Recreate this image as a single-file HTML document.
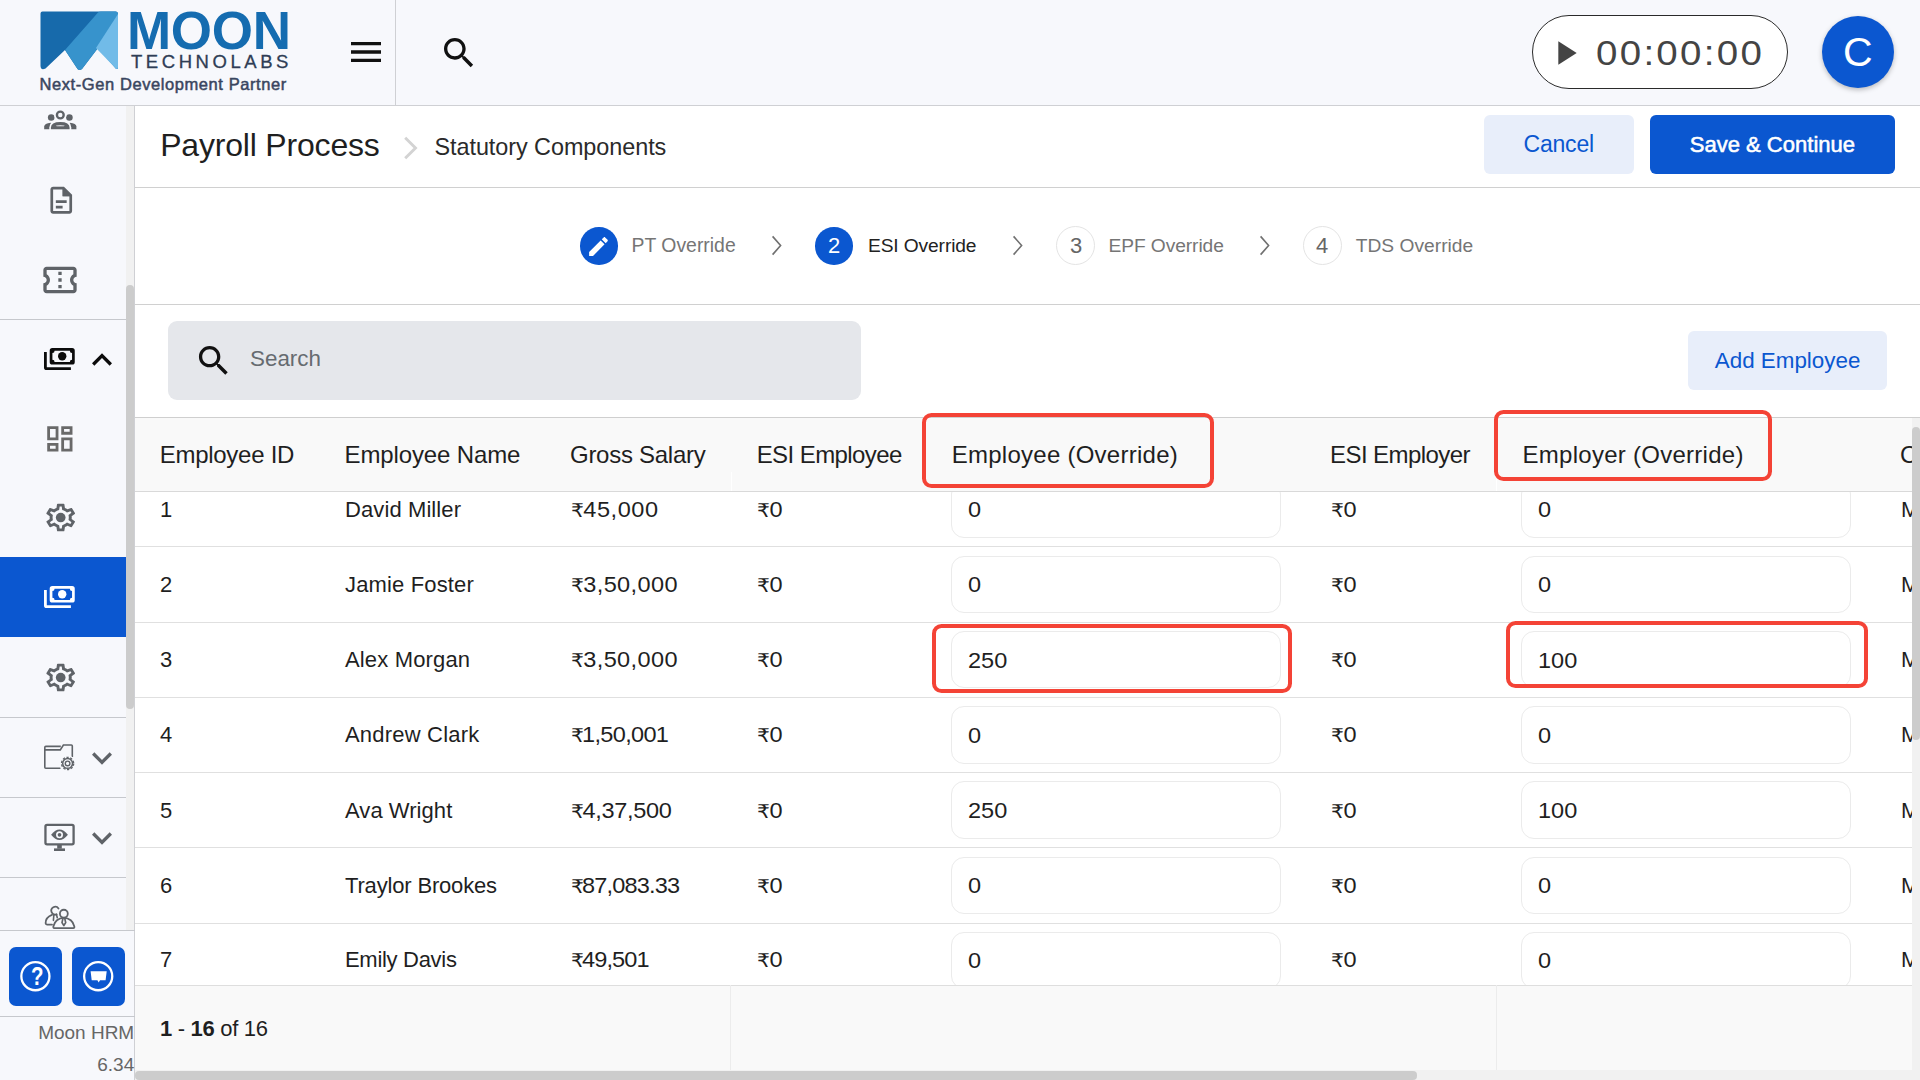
<!DOCTYPE html>
<html lang="en"><head><meta charset="utf-8"><title>Payroll Process - Statutory Components</title>
<style>
html,body{margin:0;padding:0}
body{width:1920px;height:1080px;overflow:hidden;position:relative;background:#fff;font-family:"Liberation Sans","DejaVu Sans",sans-serif;color:#1f1f1f}
.a{position:absolute;box-sizing:border-box}
.t{position:absolute;white-space:nowrap;line-height:1em}
.ic{position:absolute;display:block}
.hl{position:absolute;height:1px;background:#d0d0d0}
.vl{position:absolute;width:1px;background:#d6d6d6}
.inp{position:absolute;box-sizing:border-box;width:330.300px;height:57.400px;border:1px solid #ebebeb;border-radius:13px;background:#fff}
.red{position:absolute;box-sizing:border-box;border:4px solid #f44336;border-radius:9.500px}
.rs{font-size:.86em;margin-right:-1px}
</style></head><body>

<div class="a" style="left:0;top:0;width:1920px;height:105px;background:#f7f8fc"></div>
<div class="hl" style="left:0;top:105px;width:1920px;background:#cfd0d4"></div>
<div class="vl" style="left:395px;top:0;height:105px;background:#cfd0d4"></div>
<svg class="ic" style="left:38px;top:9px" width="84" height="64" viewBox="38 9 84 64">
<path d="M42.500 11.500H115.500Q118 11.500 118 14V67Q118 70 115.800 68.500L98 48L82 69Q79.500 71 77.500 69L65 50L45.500 68.500Q41 71 40.500 66V13.500Q40.500 11.500 42.500 11.500Z" fill="#176aab"/>
<path d="M98 12.500Q99 11.500 101 11.500H115.500Q118 11.500 118 14V67Q118 70 115.800 68.500L98 48L82 69Q79.500 71 77.500 69L65 50Z" fill="#3793cc"/>
<path d="M118 14V67Q118 70 115.800 68.500L96 48Z" fill="#71bbe8"/>
</svg>
<span class="t" style="left:127px;top:4.14px;font-size:53px;color:#156cb0;font-weight:700;letter-spacing:-0.3px;font-family:"Liberation Sans",sans-serif;">MOON</span>
<span class="t" style="left:131px;top:52.84px;font-size:18.5px;color:#2f3d55;font-weight:400;letter-spacing:3.55px;-webkit-text-stroke:0.3px #2f3d55;">TECHNOLABS</span>
<span class="t" style="left:39.5px;top:76.03px;font-size:16.5px;color:#3a4660;font-weight:400;letter-spacing:0.58px;-webkit-text-stroke:0.5px #3a4660;">Next-Gen Development Partner</span>
<svg class="ic" style="left:346.0px;top:32.0px" width="40" height="40" viewBox="0 0 24 24" fill="#111"><path d="M3 18h18v-2H3v2zm0-5h18v-2H3v2zm0-7v2h18V6H3z"/></svg>
<svg class="ic" style="left:438.5px;top:32.6px" width="40" height="40" viewBox="0 0 24 24" fill="#111"><path d="M15.5 14h-.79l-.28-.27C15.41 12.59 16 11.11 16 9.5 16 5.91 13.09 3 9.5 3S3 5.91 3 9.5 5.91 16 9.5 16c1.61 0 3.09-.59 4.23-1.57l.27.28v.79l5 4.99L20.49 19l-4.99-5zm-6 0C7.01 14 5 11.99 5 9.5S7.01 5 9.5 5 14 7.01 14 9.5 11.99 14 9.5 14z"/></svg>
<div class="a" style="left:1532px;top:15px;width:256px;height:74px;border:1px solid #2a2a2a;border-radius:37px;background:#fff"></div>
<svg class="ic" style="left:1545.0px;top:32.5px" width="40" height="40" viewBox="0 0 24 24" fill="#444"><path d="M8 5v14l11-7z"/></svg>
<span class="t" style="left:1596.3px;top:35.37px;font-size:35px;color:#444;font-weight:400;letter-spacing:2.07px;transform:scaleX(1.1);transform-origin:0 0;">00:00:00</span>
<div class="a" style="left:1821.800px;top:15.600px;width:72.600px;height:72.600px;border-radius:50%;background:#0b57d0;box-shadow:0 2px 5px rgba(0,0,0,.25)"></div>
<span class="t" style="left:1843px;top:32.29px;font-size:41px;color:#fff;font-weight:400;letter-spacing:0px;">C</span>
<div class="a" style="left:0;top:106px;width:134px;height:974px;background:#f7f8fc"></div>
<div class="vl" style="left:134px;top:106px;height:974px;background:#cfd0d4"></div>
<div class="a" style="left:126px;top:106px;width:8px;height:824px;background:#f1f1f1"></div>
<div class="a" style="left:126px;top:285px;width:8px;height:424px;background:#ccc;border-radius:4px"></div>
<div class="hl" style="left:0;top:319px;width:126px;background:#c6c8cd"></div>
<div class="hl" style="left:0;top:717px;width:126px;background:#c6c8cd"></div>
<div class="hl" style="left:0;top:797px;width:126px;background:#c6c8cd"></div>
<div class="hl" style="left:0;top:877px;width:126px;background:#c6c8cd"></div>
<div class="a" style="left:0;top:557px;width:126px;height:80px;background:#0b57d0"></div>
<svg class="ic" style="left:40px;top:106px" width="40" height="28" viewBox="40 106 40 28">
<g fill="#5f6368"><circle cx="51.2" cy="117.5" r="3.3"/><circle cx="69.4" cy="117.5" r="3.3"/>
<path d="M44.2 129.2V126.600Q44.2 123.200 50.8 122.700L52.5 129.2Z"/><path d="M76.4 129.2V126.600Q76.4 123.200 69.8 122.700L68.1 129.2Z"/></g>
<circle cx="60.3" cy="115" r="6.200" fill="#f7f8fc"/>
<path d="M49.3 130V127.500Q49.3 120.300 60.3 120.300Q71.300 120.300 71.300 127.500V130Z" fill="#f7f8fc"/>
<circle cx="60.3" cy="115" r="3.400" fill="none" stroke="#5f6368" stroke-width="2.350"/>
<path d="M50.9 129.2V127.800Q50.9 121.900 60.3 121.900Q69.600 121.900 69.600 127.800V129.2Z" fill="#5f6368"/>
<ellipse cx="60.3" cy="125.800" rx="4.400" ry="0.550" fill="#f7f8fc"/>
</svg>
<svg class="ic" style="left:44.55px;top:184.1px" width="32.5" height="32.5" viewBox="0 0 24 24" fill="#5f6368"><path d="M8 16h5v2H8zm0-4h8v2H8zm6-10H6c-1.1 0-2 .9-2 2v16c0 1.1.89 2 1.99 2H18c1.1 0 2-.9 2-2V8l-6-6zm4 18H6V4h7v5h5v11z"/><path d="M13 3.2L18.800 9H13z"/></svg>
<svg class="ic" style="left:39.5px;top:259.6px" width="40" height="40" viewBox="0 0 24 24" fill="#5f6368"><path d="M22 10V6c0-1.11-.9-2-2-2H4c-1.1 0-1.99.89-1.99 2v4c1.1 0 1.99.9 1.99 2s-.89 2-2 2v4c0 1.1.9 2 2 2h16c1.1 0 2-.9 2-2v-4c-1.1 0-2-.9-2-2s.9-2 2-2zm-2-1.46c-1.19.69-2 1.99-2 3.46s.81 2.77 2 3.46V18H4v-2.54c1.19-.69 2-1.99 2-3.46 0-1.48-.8-2.77-1.99-3.46L4 6h16v2.54zM11 15h2v2h-2zm0-4h2v2h-2zm0-4h2v2h-2z"/></svg>
<svg class="ic" style="left:44px;top:348.4px" width="31" height="22.500" viewBox="0 0 31 22.500" fill="#0c0c0c"><path fill-rule="evenodd" d="M8.300 0H28.150a2.600 2.600 0 0 1 2.600 2.600V14a2.600 2.600 0 0 1-2.600 2.600H8.300a2.600 2.600 0 0 1-2.600-2.600V2.600a2.600 2.600 0 0 1 2.600-2.600ZM10.600 2.700H25.850a2.200 2.200 0 0 0 2.200 2.200V11.700a2.200 2.200 0 0 0-2.200 2.200H10.600a2.200 2.200 0 0 0-2.200-2.200V4.900a2.200 2.200 0 0 0 2.200-2.200Z"/><circle cx="18.200" cy="8.300" r="4.200"/><path d="M0 3.900H2.800V19.300H26.900V22.100H2.600A2.600 2.600 0 0 1 0 19.500Z"/></svg>
<svg class="ic" style="left:82.0px;top:339.85px" width="40" height="40" viewBox="0 0 24 24" fill="#0c0c0c"><path d="M12 8l-6 6 1.41 1.41L12 10.83l4.59 4.58L18 14z"/></svg>
<svg class="ic" style="left:42.699999999999996px;top:421.95px" width="33.7" height="33.7" viewBox="0 0 24 24" fill="#696969"><path d="M19 5v2h-4V5h4M9 5v6H5V5h4m10 8v6h-4v-6h4M9 17v2H5v-2h4M21 3h-8v6h8V3zM11 3H3v10h8V3zm10 8h-8v10h8V11zm-10 4H3v6h8v-6z"/></svg>
<svg class="ic" style="left:43.10px;top:500.85px" width="35.4" height="33.1" viewBox="0 0 24 24" preserveAspectRatio="none" fill="#5f6368"><path d="M19.43 12.98c.04-.32.07-.64.07-.98 0-.34-.03-.66-.07-.98l2.11-1.65c.19-.15.24-.42.12-.64l-2-3.46c-.09-.16-.26-.25-.44-.25-.06 0-.12.01-.17.03l-2.49 1c-.52-.4-1.08-.73-1.69-.98l-.38-2.65C14.46 2.18 14.25 2 14 2h-4c-.25 0-.46.18-.49.42l-.38 2.65c-.61.25-1.17.59-1.69.98l-2.49-1c-.06-.02-.12-.03-.18-.03-.17 0-.34.09-.43.25l-2 3.46c-.13.22-.07.49.12.64l2.11 1.65c-.04.32-.07.65-.07.98 0 .33.03.66.07.98l-2.11 1.65c-.19.15-.24.42-.12.64l2 3.46c.09.16.26.25.44.25.06 0 .12-.01.17-.03l2.49-1c.52.4 1.08.73 1.69.98l.38 2.65c.03.24.24.42.49.42h4c.25 0 .46-.18.49-.42l.38-2.65c.61-.25 1.17-.59 1.69-.98l2.49 1c.06.02.12.03.18.03.17 0 .34-.09.43-.25l2-3.46c.12-.22.07-.49-.12-.64l-2.11-1.65zm-1.98-1.71c.04.31.05.52.05.73 0 .21-.02.43-.05.73l-.14 1.13.89.7 1.08.84-.7 1.21-1.27-.51-1.04-.42-.9.68c-.43.32-.84.56-1.25.73l-1.06.43-.16 1.13-.2 1.35h-1.4l-.19-1.35-.16-1.13-1.06-.43c-.43-.18-.83-.41-1.23-.71l-.91-.7-1.06.43-1.27.51-.7-1.21 1.08-.84.89-.7-.14-1.13c-.03-.31-.05-.54-.05-.74s.02-.43.05-.73l.14-1.13-.89-.7-1.08-.84.7-1.21 1.27.51 1.04.42.9-.68c.43-.32.84-.56 1.25-.73l1.06-.43.16-1.13.2-1.35h1.39l.19 1.35.16 1.13 1.06.43c.43.18.83.41 1.23.71l.91.7 1.06-.43 1.27-.51.7 1.21-1.07.85-.89.7.14 1.13z"/><ellipse cx="12" cy="12" rx="3.300" ry="3.500"/></svg>
<svg class="ic" style="left:44px;top:586.4px" width="31" height="22.500" viewBox="0 0 31 22.500" fill="#fff"><path fill-rule="evenodd" d="M8.300 0H28.150a2.600 2.600 0 0 1 2.600 2.600V14a2.600 2.600 0 0 1-2.600 2.600H8.300a2.600 2.600 0 0 1-2.600-2.600V2.600a2.600 2.600 0 0 1 2.600-2.600ZM10.600 2.700H25.850a2.200 2.200 0 0 0 2.200 2.200V11.700a2.200 2.200 0 0 0-2.200 2.200H10.600a2.200 2.200 0 0 0-2.200-2.200V4.900a2.200 2.200 0 0 0 2.200-2.200Z"/><circle cx="18.200" cy="8.300" r="4.200"/><path d="M0 3.900H2.800V19.300H26.900V22.100H2.600A2.600 2.600 0 0 1 0 19.500Z"/></svg>
<svg class="ic" style="left:43.10px;top:660.85px" width="35.4" height="33.1" viewBox="0 0 24 24" preserveAspectRatio="none" fill="#5f6368"><path d="M19.43 12.98c.04-.32.07-.64.07-.98 0-.34-.03-.66-.07-.98l2.11-1.65c.19-.15.24-.42.12-.64l-2-3.46c-.09-.16-.26-.25-.44-.25-.06 0-.12.01-.17.03l-2.49 1c-.52-.4-1.08-.73-1.69-.98l-.38-2.65C14.46 2.18 14.25 2 14 2h-4c-.25 0-.46.18-.49.42l-.38 2.65c-.61.25-1.17.59-1.69.98l-2.49-1c-.06-.02-.12-.03-.18-.03-.17 0-.34.09-.43.25l-2 3.46c-.13.22-.07.49.12.64l2.11 1.65c-.04.32-.07.65-.07.98 0 .33.03.66.07.98l-2.11 1.65c-.19.15-.24.42-.12.64l2 3.46c.09.16.26.25.44.25.06 0 .12-.01.17-.03l2.49-1c.52.4 1.08.73 1.69.98l.38 2.65c.03.24.24.42.49.42h4c.25 0 .46-.18.49-.42l.38-2.65c.61-.25 1.17-.59 1.69-.98l2.49 1c.06.02.12.03.18.03.17 0 .34-.09.43-.25l2-3.46c.12-.22.07-.49-.12-.64l-2.11-1.65zm-1.98-1.71c.04.31.05.52.05.73 0 .21-.02.43-.05.73l-.14 1.13.89.7 1.08.84-.7 1.21-1.27-.51-1.04-.42-.9.68c-.43.32-.84.56-1.25.73l-1.06.43-.16 1.13-.2 1.35h-1.4l-.19-1.35-.16-1.13-1.06-.43c-.43-.18-.83-.41-1.23-.71l-.91-.7-1.06.43-1.27.51-.7-1.21 1.08-.84.89-.7-.14-1.13c-.03-.31-.05-.54-.05-.74s.02-.43.05-.73l.14-1.13-.89-.7-1.08-.84.7-1.21 1.27.51 1.04.42.9-.68c.43-.32.84-.56 1.25-.73l1.06-.43.16-1.13.2-1.35h1.39l.19 1.35.16 1.13 1.06.43c.43.18.83.41 1.23.71l.91.7 1.06-.43 1.27-.51.7 1.21-1.07.85-.89.7.14 1.13z"/><ellipse cx="12" cy="12" rx="3.300" ry="3.500"/></svg>
<svg class="ic" style="left:40px;top:740px" width="40" height="36" viewBox="40 740 40 36" fill="none" stroke="#5f6368" stroke-width="1.600">
<path d="M44.8 767.200V747.400Q44.8 746.400 45.8 746.400H60.8M44.8 749.900H60.300L63.400 745H71.300Q72.300 745 72.300 746V757M44.8 767.200Q44.8 768.200 45.8 768.200H60.500"/>
<circle cx="67.600" cy="763.450" r="8" fill="#f7f8fc" stroke="none"/>
<circle cx="67.600" cy="763.450" r="4.900" stroke-width="1.500"/>
<circle cx="67.600" cy="763.450" r="6.100" stroke-width="1.300" stroke-dasharray="2.300 1.533"/>
<circle cx="67.600" cy="763.450" r="2.300" stroke-width="1.400"/>
</svg>
<svg class="ic" style="left:81.75px;top:738.1px" width="40" height="40" viewBox="0 0 24 24" fill="#5f6368"><path d="M16.59 8.59L12 13.17 7.41 8.59 6 10l6 6 6-6z"/></svg>
<svg class="ic" style="left:40px;top:820px" width="40" height="34" viewBox="40 820 40 34">
<rect x="45.450" y="824.950" width="28.150" height="19.400" rx="1.600" fill="none" stroke="#5f6368" stroke-width="2.300"/>
<rect x="57.200" y="845" width="4.600" height="3.600" fill="#5f6368"/><rect x="54" y="848.400" width="11" height="2.600" fill="#5f6368"/>
<path d="M51.100 834.800Q59.500 824.400 67.900 834.800Q59.500 845.200 51.100 834.800Z" fill="#5f6368"/>
<circle cx="59.500" cy="834.800" r="3.500" fill="#f7f8fc"/><circle cx="59.500" cy="834.800" r="1.850" fill="#5f6368"/>
</svg>
<svg class="ic" style="left:81.75px;top:818.2px" width="40" height="40" viewBox="0 0 24 24" fill="#5f6368"><path d="M16.59 8.59L12 13.17 7.41 8.59 6 10l6 6 6-6z"/></svg>
<svg class="ic" style="left:40px;top:900px" width="40" height="30" viewBox="40 900 40 30" fill="none" stroke="#5f6368" stroke-width="1.800" stroke-linecap="round" stroke-linejoin="round">
<path d="M58.500 908.600A3.900 3.900 0 1 0 56.600 914.400"/>
<path d="M52 914.900C48 916.500 45.500 920 45.600 923.300Q45.700 924.600 47 924.600H52"/>
<path d="M53.800 915.500L53.400 920.400M56.400 914.300L57.300 917.800" stroke-width="1.600"/>
<path d="M54.300 928.200C53.400 928.200 53.200 927.300 53.400 926.300C54.300 921.500 58.500 917.800 63.850 917.800C69.200 917.800 73.400 921.500 74.300 926.300C74.500 927.300 74.300 928.200 73.300 928.200Z" fill="#f7f8fc"/>
<circle cx="63.850" cy="913.700" r="3.950" fill="#f7f8fc"/>
<path d="M62.900 918.600L62 922.600L63.850 925.500L65.700 922.600L64.800 918.600" stroke-width="1.700"/>
</svg>
<div class="hl" style="left:0;top:930px;width:135px;background:#c6c8cd"></div>
<div class="a" style="left:9.100px;top:946.600px;width:52.800px;height:59.400px;background:#0b57d0;border-radius:7px"></div>
<div class="a" style="left:72.100px;top:946.600px;width:53.100px;height:59.400px;background:#0b57d0;border-radius:7px"></div>
<svg class="ic" style="left:15px;top:956px" width="120" height="40" viewBox="15 956 120 40">
<circle cx="35.400" cy="976.200" r="14.050" fill="none" stroke="#fff" stroke-width="2.300"/>
<circle cx="98.200" cy="976.200" r="14.050" fill="none" stroke="#fff" stroke-width="2.300"/>
<path d="M90.600 971.200H106.700L105.600 980.300H100L98.700 982.400L97.400 980.300H91.700Z" fill="#fff"/></svg>
<span class="t" style="left:30.7px;top:964.21px;font-size:25.5px;color:#fff;font-weight:700;letter-spacing:0px;transform:scaleX(0.8);transform-origin:0 0;">?</span>
<div class="hl" style="left:0;top:1016px;width:135px;background:#c6c8cd"></div>
<span class="t" style="right:1785.8px;top:1022.52px;font-size:19px;color:#666;font-weight:400;letter-spacing:0px;">Moon HRM</span>
<span class="t" style="right:1785.8px;top:1054.72px;font-size:19px;color:#666;font-weight:400;letter-spacing:0px;">6.34</span>
<span class="t" style="left:160.2px;top:129.01px;font-size:32px;color:#1f1f1f;font-weight:400;letter-spacing:-0.19px;">Payroll Process</span>
<svg class="ic" style="left:397.600px;top:132.500px" width="26" height="30" viewBox="0 0 26 30" fill="none" stroke="#d3d3d3" stroke-width="2.900"><path d="M7.200 4.800L17.500 15L7.200 25.200"/></svg>
<span class="t" style="left:434.5px;top:136.09px;font-size:23.4px;color:#2a2a2a;font-weight:400;letter-spacing:-0.05px;">Statutory Components</span>
<div class="a" style="left:1484px;top:115px;width:150px;height:59px;background:#e8eefa;border-radius:6px"></div>
<span class="t" style="left:1523.5px;top:133.03px;font-size:23px;color:#0b57d0;font-weight:400;letter-spacing:-0.2px;">Cancel</span>
<div class="a" style="left:1650px;top:115px;width:245px;height:59px;background:#0b57d0;border-radius:6px"></div>
<span class="t" style="left:1689.7px;top:134.08px;font-size:22px;color:#fff;font-weight:400;letter-spacing:0.02px;-webkit-text-stroke:0.55px #fff;">Save &amp; Continue</span>
<div class="hl" style="left:135px;top:187px;width:1785px"></div>
<div class="a" style="left:580px;top:227px;width:37.5px;height:37.5px;border-radius:50%;background:#0b57d0"></div>
<svg class="ic" style="left:586.0px;top:233.5px" width="25" height="25" viewBox="0 0 24 24" fill="#fff"><path d="M3 17.25V21h3.75L17.81 9.94l-3.75-3.75L3 17.25zM20.71 7.04c.39-.39.39-1.02 0-1.41l-2.34-2.34c-.39-.39-1.02-.39-1.41 0l-1.83 1.83 3.75 3.75 1.83-1.83z"/></svg>
<span class="t" style="left:631.5px;top:236.18px;font-size:19.4px;color:#757575;font-weight:400;letter-spacing:0px;">PT Override</span>
<svg class="ic" style="left:769px;top:233px" width="16" height="25" viewBox="0 0 16 25" fill="none" stroke="#707070" stroke-width="1.600"><path d="M3.600 3.400L11.600 12.500L3.600 21.600"/></svg>
<div class="a" style="left:815px;top:227px;width:37.5px;height:37.5px;border-radius:50%;background:#0b57d0"></div>
<span class="t" style="left:828px;top:235.38px;font-size:22px;color:#fff;font-weight:400;letter-spacing:0px;">2</span>
<span class="t" style="left:868px;top:235.75px;font-size:19.2px;color:#222;font-weight:400;letter-spacing:-0.12px;">ESI Override</span>
<svg class="ic" style="left:1010px;top:233px" width="16" height="25" viewBox="0 0 16 25" fill="none" stroke="#707070" stroke-width="1.600"><path d="M3.600 3.400L11.600 12.500L3.600 21.600"/></svg>
<div class="a" style="left:1056px;top:226.300px;width:39px;height:39px;border-radius:50%;border:1px solid #e4e4e4;background:#fff"></div>
<span class="t" style="left:1070px;top:235.38px;font-size:22px;color:#666;font-weight:400;letter-spacing:0px;">3</span>
<span class="t" style="left:1108.5px;top:235.75px;font-size:19.2px;color:#757575;font-weight:400;letter-spacing:-0.08px;">EPF Override</span>
<svg class="ic" style="left:1257px;top:233px" width="16" height="25" viewBox="0 0 16 25" fill="none" stroke="#707070" stroke-width="1.600"><path d="M3.600 3.400L11.600 12.500L3.600 21.600"/></svg>
<div class="a" style="left:1303px;top:226.300px;width:39px;height:39px;border-radius:50%;border:1px solid #e4e4e4;background:#fff"></div>
<span class="t" style="left:1316px;top:235.38px;font-size:22px;color:#666;font-weight:400;letter-spacing:0px;">4</span>
<span class="t" style="left:1355.7px;top:235.75px;font-size:19.2px;color:#757575;font-weight:400;letter-spacing:0.02px;">TDS Override</span>
<div class="hl" style="left:135px;top:304px;width:1785px"></div>
<div class="a" style="left:168px;top:321px;width:693px;height:79px;background:#e5e7eb;border-radius:9px"></div>
<svg class="ic" style="left:194.25px;top:340.55px" width="39.5" height="39.5" viewBox="0 0 24 24" fill="#111"><path d="M15.5 14h-.79l-.28-.27C15.41 12.59 16 11.11 16 9.5 16 5.91 13.09 3 9.5 3S3 5.91 3 9.5 5.91 16 9.5 16c1.61 0 3.09-.59 4.23-1.57l.27.28v.79l5 4.99L20.49 19l-4.99-5zm-6 0C7.01 14 5 11.99 5 9.5S7.01 5 9.5 5 14 7.01 14 9.5 11.99 14 9.5 14z"/></svg>
<span class="t" style="left:250px;top:348.04px;font-size:22.4px;color:#666b70;font-weight:400;letter-spacing:0px;">Search</span>
<div class="a" style="left:1688px;top:331px;width:199px;height:59px;background:#e8eefa;border-radius:6px"></div>
<span class="t" style="left:1714.75px;top:350.24px;font-size:22.4px;color:#0b57d0;font-weight:400;letter-spacing:0px;">Add Employee</span>
<div class="hl" style="left:135px;top:417px;width:1785px;background:#cfcfcf"></div>
<div class="hl" style="left:135px;top:546px;width:1777px;background:#e0e0e0"></div>
<div class="inp" style="left:951px;top:480.5px"></div>
<div class="inp" style="left:1521px;top:480.5px"></div>
<span class="t" style="left:160px;top:498.78px;font-size:22px;color:#1f1f1f;font-weight:400;letter-spacing:0px;">1</span>
<span class="t" style="left:345px;top:498.78px;font-size:22px;color:#1f1f1f;font-weight:400;letter-spacing:0.1px;">David Miller</span>
<span class="t" style="left:570.8px;top:498.78px;font-size:22px;color:#1f1f1f;font-weight:400;letter-spacing:0.5px;transform:scaleX(1.07);transform-origin:0 0;"><span class="rs">₹</span>45,000</span>
<span class="t" style="left:757px;top:498.78px;font-size:22px;color:#1f1f1f;font-weight:400;letter-spacing:0.6px;transform:scaleX(1.07);transform-origin:0 0;"><span class="rs">₹</span>0</span>
<span class="t" style="left:967.5px;top:499.48px;font-size:22px;color:#1f1f1f;font-weight:400;letter-spacing:0px;transform:scaleX(1.07);transform-origin:0 0;">0</span>
<span class="t" style="left:1330.5px;top:498.78px;font-size:22px;color:#1f1f1f;font-weight:400;letter-spacing:0.6px;transform:scaleX(1.07);transform-origin:0 0;"><span class="rs">₹</span>0</span>
<span class="t" style="left:1537.5px;top:499.48px;font-size:22px;color:#1f1f1f;font-weight:400;letter-spacing:0px;transform:scaleX(1.07);transform-origin:0 0;">0</span>
<span class="t" style="left:1901px;top:498.78px;font-size:22px;color:#1f1f1f;font-weight:400;letter-spacing:0px;">M</span>
<div class="hl" style="left:135px;top:622px;width:1777px;background:#e0e0e0"></div>
<div class="inp" style="left:951px;top:555.75px"></div>
<div class="inp" style="left:1521px;top:555.75px"></div>
<span class="t" style="left:160px;top:573.88px;font-size:22px;color:#1f1f1f;font-weight:400;letter-spacing:0px;">2</span>
<span class="t" style="left:345px;top:573.88px;font-size:22px;color:#1f1f1f;font-weight:400;letter-spacing:0.15px;">Jamie Foster</span>
<span class="t" style="left:570.8px;top:573.88px;font-size:22px;color:#1f1f1f;font-weight:400;letter-spacing:0.37px;transform:scaleX(1.07);transform-origin:0 0;"><span class="rs">₹</span>3,50,000</span>
<span class="t" style="left:757px;top:573.88px;font-size:22px;color:#1f1f1f;font-weight:400;letter-spacing:0.6px;transform:scaleX(1.07);transform-origin:0 0;"><span class="rs">₹</span>0</span>
<span class="t" style="left:967.5px;top:574.08px;font-size:22px;color:#1f1f1f;font-weight:400;letter-spacing:0px;transform:scaleX(1.07);transform-origin:0 0;">0</span>
<span class="t" style="left:1330.5px;top:573.88px;font-size:22px;color:#1f1f1f;font-weight:400;letter-spacing:0.6px;transform:scaleX(1.07);transform-origin:0 0;"><span class="rs">₹</span>0</span>
<span class="t" style="left:1537.5px;top:574.08px;font-size:22px;color:#1f1f1f;font-weight:400;letter-spacing:0px;transform:scaleX(1.07);transform-origin:0 0;">0</span>
<span class="t" style="left:1901px;top:573.88px;font-size:22px;color:#1f1f1f;font-weight:400;letter-spacing:0px;">M</span>
<div class="hl" style="left:135px;top:697px;width:1777px;background:#e0e0e0"></div>
<div class="inp" style="left:951px;top:631px"></div>
<div class="inp" style="left:1521px;top:631px"></div>
<span class="t" style="left:160px;top:648.88px;font-size:22px;color:#1f1f1f;font-weight:400;letter-spacing:0px;">3</span>
<span class="t" style="left:345px;top:648.88px;font-size:22px;color:#1f1f1f;font-weight:400;letter-spacing:0.15px;">Alex Morgan</span>
<span class="t" style="left:570.8px;top:648.88px;font-size:22px;color:#1f1f1f;font-weight:400;letter-spacing:0.37px;transform:scaleX(1.07);transform-origin:0 0;"><span class="rs">₹</span>3,50,000</span>
<span class="t" style="left:757px;top:648.88px;font-size:22px;color:#1f1f1f;font-weight:400;letter-spacing:0.6px;transform:scaleX(1.07);transform-origin:0 0;"><span class="rs">₹</span>0</span>
<span class="t" style="left:967.5px;top:649.78px;font-size:22px;color:#1f1f1f;font-weight:400;letter-spacing:0px;transform:scaleX(1.07);transform-origin:0 0;">250</span>
<span class="t" style="left:1330.5px;top:648.88px;font-size:22px;color:#1f1f1f;font-weight:400;letter-spacing:0.6px;transform:scaleX(1.07);transform-origin:0 0;"><span class="rs">₹</span>0</span>
<span class="t" style="left:1537.5px;top:649.78px;font-size:22px;color:#1f1f1f;font-weight:400;letter-spacing:0px;transform:scaleX(1.07);transform-origin:0 0;">100</span>
<span class="t" style="left:1901px;top:648.88px;font-size:22px;color:#1f1f1f;font-weight:400;letter-spacing:0px;">M</span>
<div class="hl" style="left:135px;top:772px;width:1777px;background:#e0e0e0"></div>
<div class="inp" style="left:951px;top:706.25px"></div>
<div class="inp" style="left:1521px;top:706.25px"></div>
<span class="t" style="left:160px;top:723.78px;font-size:22px;color:#1f1f1f;font-weight:400;letter-spacing:0px;">4</span>
<span class="t" style="left:345px;top:723.78px;font-size:22px;color:#1f1f1f;font-weight:400;letter-spacing:0.2px;">Andrew Clark</span>
<span class="t" style="left:570.8px;top:723.78px;font-size:22px;color:#1f1f1f;font-weight:400;letter-spacing:-0.65px;transform:scaleX(1.07);transform-origin:0 0;"><span class="rs">₹</span>1,50,001</span>
<span class="t" style="left:757px;top:723.78px;font-size:22px;color:#1f1f1f;font-weight:400;letter-spacing:0.6px;transform:scaleX(1.07);transform-origin:0 0;"><span class="rs">₹</span>0</span>
<span class="t" style="left:967.5px;top:725.18px;font-size:22px;color:#1f1f1f;font-weight:400;letter-spacing:0px;transform:scaleX(1.07);transform-origin:0 0;">0</span>
<span class="t" style="left:1330.5px;top:723.78px;font-size:22px;color:#1f1f1f;font-weight:400;letter-spacing:0.6px;transform:scaleX(1.07);transform-origin:0 0;"><span class="rs">₹</span>0</span>
<span class="t" style="left:1537.5px;top:725.18px;font-size:22px;color:#1f1f1f;font-weight:400;letter-spacing:0px;transform:scaleX(1.07);transform-origin:0 0;">0</span>
<span class="t" style="left:1901px;top:723.78px;font-size:22px;color:#1f1f1f;font-weight:400;letter-spacing:0px;">M</span>
<div class="hl" style="left:135px;top:847px;width:1777px;background:#e0e0e0"></div>
<div class="inp" style="left:951px;top:781.4px"></div>
<div class="inp" style="left:1521px;top:781.4px"></div>
<span class="t" style="left:160px;top:799.68px;font-size:22px;color:#1f1f1f;font-weight:400;letter-spacing:0px;">5</span>
<span class="t" style="left:345px;top:799.68px;font-size:22px;color:#1f1f1f;font-weight:400;letter-spacing:0.05px;">Ava Wright</span>
<span class="t" style="left:570.8px;top:799.68px;font-size:22px;color:#1f1f1f;font-weight:400;letter-spacing:-0.3px;transform:scaleX(1.07);transform-origin:0 0;"><span class="rs">₹</span>4,37,500</span>
<span class="t" style="left:757px;top:799.68px;font-size:22px;color:#1f1f1f;font-weight:400;letter-spacing:0.6px;transform:scaleX(1.07);transform-origin:0 0;"><span class="rs">₹</span>0</span>
<span class="t" style="left:967.5px;top:799.68px;font-size:22px;color:#1f1f1f;font-weight:400;letter-spacing:0px;transform:scaleX(1.07);transform-origin:0 0;">250</span>
<span class="t" style="left:1330.5px;top:799.68px;font-size:22px;color:#1f1f1f;font-weight:400;letter-spacing:0.6px;transform:scaleX(1.07);transform-origin:0 0;"><span class="rs">₹</span>0</span>
<span class="t" style="left:1537.5px;top:799.68px;font-size:22px;color:#1f1f1f;font-weight:400;letter-spacing:0px;transform:scaleX(1.07);transform-origin:0 0;">100</span>
<span class="t" style="left:1901px;top:799.68px;font-size:22px;color:#1f1f1f;font-weight:400;letter-spacing:0px;">M</span>
<div class="hl" style="left:135px;top:923px;width:1777px;background:#e0e0e0"></div>
<div class="inp" style="left:951px;top:856.9px"></div>
<div class="inp" style="left:1521px;top:856.9px"></div>
<span class="t" style="left:160px;top:875.08px;font-size:22px;color:#1f1f1f;font-weight:400;letter-spacing:0px;">6</span>
<span class="t" style="left:345px;top:875.08px;font-size:22px;color:#1f1f1f;font-weight:400;letter-spacing:-0.17px;">Traylor Brookes</span>
<span class="t" style="left:570.8px;top:875.08px;font-size:22px;color:#1f1f1f;font-weight:400;letter-spacing:-0.77px;transform:scaleX(1.07);transform-origin:0 0;"><span class="rs">₹</span>87,083.33</span>
<span class="t" style="left:757px;top:875.08px;font-size:22px;color:#1f1f1f;font-weight:400;letter-spacing:0.6px;transform:scaleX(1.07);transform-origin:0 0;"><span class="rs">₹</span>0</span>
<span class="t" style="left:967.5px;top:875.08px;font-size:22px;color:#1f1f1f;font-weight:400;letter-spacing:0px;transform:scaleX(1.07);transform-origin:0 0;">0</span>
<span class="t" style="left:1330.5px;top:875.08px;font-size:22px;color:#1f1f1f;font-weight:400;letter-spacing:0.6px;transform:scaleX(1.07);transform-origin:0 0;"><span class="rs">₹</span>0</span>
<span class="t" style="left:1537.5px;top:875.08px;font-size:22px;color:#1f1f1f;font-weight:400;letter-spacing:0px;transform:scaleX(1.07);transform-origin:0 0;">0</span>
<span class="t" style="left:1901px;top:875.08px;font-size:22px;color:#1f1f1f;font-weight:400;letter-spacing:0px;">M</span>
<div class="hl" style="left:135px;top:998px;width:1777px;background:#e0e0e0"></div>
<div class="inp" style="left:951px;top:932px"></div>
<div class="inp" style="left:1521px;top:932px"></div>
<span class="t" style="left:160px;top:949.18px;font-size:22px;color:#1f1f1f;font-weight:400;letter-spacing:0px;">7</span>
<span class="t" style="left:345px;top:949.18px;font-size:22px;color:#1f1f1f;font-weight:400;letter-spacing:-0.3px;">Emily Davis</span>
<span class="t" style="left:570.8px;top:949.18px;font-size:22px;color:#1f1f1f;font-weight:400;letter-spacing:-0.8px;transform:scaleX(1.07);transform-origin:0 0;"><span class="rs">₹</span>49,501</span>
<span class="t" style="left:757px;top:949.18px;font-size:22px;color:#1f1f1f;font-weight:400;letter-spacing:0.6px;transform:scaleX(1.07);transform-origin:0 0;"><span class="rs">₹</span>0</span>
<span class="t" style="left:967.5px;top:950.48px;font-size:22px;color:#1f1f1f;font-weight:400;letter-spacing:0px;transform:scaleX(1.07);transform-origin:0 0;">0</span>
<span class="t" style="left:1330.5px;top:949.18px;font-size:22px;color:#1f1f1f;font-weight:400;letter-spacing:0.6px;transform:scaleX(1.07);transform-origin:0 0;"><span class="rs">₹</span>0</span>
<span class="t" style="left:1537.5px;top:950.48px;font-size:22px;color:#1f1f1f;font-weight:400;letter-spacing:0px;transform:scaleX(1.07);transform-origin:0 0;">0</span>
<span class="t" style="left:1901px;top:949.18px;font-size:22px;color:#1f1f1f;font-weight:400;letter-spacing:0px;">M</span>
<div class="a" style="left:135px;top:418px;width:1785px;height:73px;background:#f9f9f9"></div>
<div class="hl" style="left:135px;top:491px;width:1785px;background:#d9d9d9"></div>
<span class="t" style="left:159.7px;top:443.18px;font-size:24px;color:#1f1f1f;font-weight:400;letter-spacing:-0.27px;">Employee ID</span>
<span class="t" style="left:344.5px;top:443.18px;font-size:24px;color:#1f1f1f;font-weight:400;letter-spacing:-0.12px;">Employee Name</span>
<span class="t" style="left:570px;top:443.18px;font-size:24px;color:#1f1f1f;font-weight:400;letter-spacing:-0.27px;">Gross Salary</span>
<span class="t" style="left:756.7px;top:443.18px;font-size:24px;color:#1f1f1f;font-weight:400;letter-spacing:-0.58px;">ESI Employee</span>
<span class="t" style="left:951.7px;top:443.18px;font-size:24px;color:#1f1f1f;font-weight:400;letter-spacing:0.26px;">Employee (Override)</span>
<span class="t" style="left:1330px;top:443.18px;font-size:24px;color:#1f1f1f;font-weight:400;letter-spacing:-0.57px;">ESI Employer</span>
<span class="t" style="left:1522.5px;top:443.18px;font-size:24px;color:#1f1f1f;font-weight:400;letter-spacing:0.27px;">Employer (Override)</span>
<span class="t" style="left:1900px;top:443.18px;font-size:24px;color:#1f1f1f;font-weight:400;letter-spacing:0px;">C</span>
<div class="vl" style="left:731px;top:472px;height:19px;background:#fff"></div>
<div class="vl" style="left:1496px;top:472px;height:19px;background:#fff"></div>
<div class="a" style="left:135px;top:985px;width:1785px;height:95px;background:#f9f9f9"></div>
<div class="hl" style="left:135px;top:985px;width:1785px;background:#dedede"></div>
<div class="vl" style="left:730px;top:985px;height:85px;background:#ececec"></div>
<div class="vl" style="left:1496px;top:985px;height:85px;background:#ececec"></div>
<span class="t" style="left:160px;top:1018.200px;font-size:22px;letter-spacing:-0.3px;color:#1f1f1f"><b>1</b> - <b>16</b> of 16</span>
<div class="a" style="left:135px;top:1070px;width:1785px;height:10px;background:#f1f1f1"></div>
<div class="a" style="left:135px;top:1071px;width:1282px;height:9px;background:#ccc;border-radius:4px"></div>
<div class="a" style="left:1912px;top:418px;width:8px;height:652px;background:#f1f1f1"></div>
<div class="a" style="left:1912px;top:427px;width:8px;height:313px;background:#ccc;border-radius:4px"></div>
<div class="red" style="left:922px;top:412.600px;width:292.400px;height:75.500px"></div>
<div class="red" style="left:1494.200px;top:410px;width:277.800px;height:71.300px"></div>
<div class="red" style="left:931.800px;top:623.800px;width:360.300px;height:69.100px"></div>
<div class="red" style="left:1505.800px;top:621.200px;width:362.400px;height:66.600px"></div>
</body></html>
